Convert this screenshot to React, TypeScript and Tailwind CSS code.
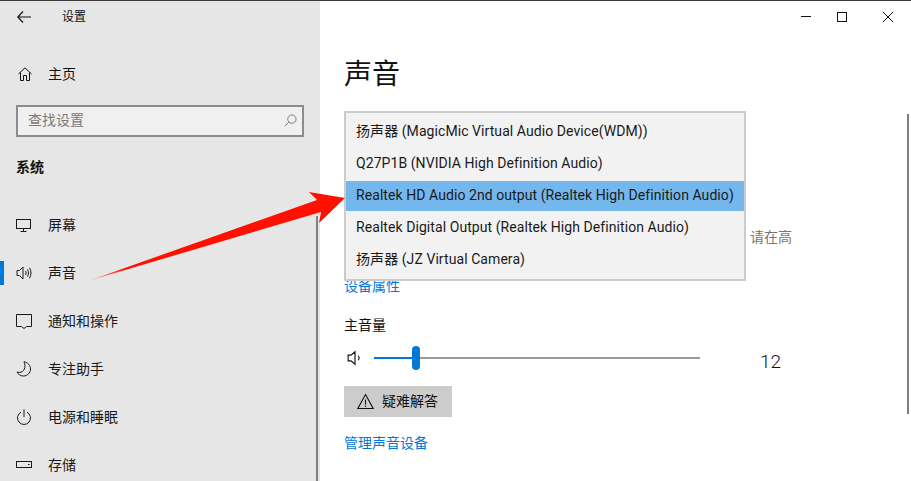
import type { ReactNode } from 'react';

const FONT = "font-['Roboto','Noto_Sans_CJK_SC',sans-serif]";

const Icon = ({ children, className = 'w-4 h-4' }: { children: ReactNode; className?: string }) => (
  <svg viewBox="0 0 16 16" fill="none" stroke="currentColor" strokeWidth="1" className={className}>
    {children}
  </svg>
);

const navItems: { label: string; active?: boolean; icon: ReactNode }[] = [
  {
    label: '屏幕',
    icon: (
      <>
        <rect x="0.5" y="2.5" width="14" height="9" />
        <path d="M7.5 11.5v3M4.5 14.5h6" />
      </>
    ),
  },
  {
    label: '声音',
    active: true,
    icon: (
      <>
        <path d="M1 5.500h2.500L7 2v12l-3.500-3.500H1z" />
        <path d="M9.500 6c.8 1.200.8 2.800 0 4M11.500 4.500c1.300 2.200 1.300 4.800 0 7M13.500 2.800c2 3.200 2 7.200 0 10.400" />
      </>
    ),
  },
  {
    label: '通知和操作',
    icon: <path d="M.5 1.500h15v12h-5L8 15.500l-2.500-2h-5z" />,
  },
  {
    label: '专注助手',
    icon: <path d="M8 .8c3.800.6 6.500 3.700 6.500 7.200 0 4-3.200 7-7 7-2.800 0-5.300-1.600-6.500-4 .8.300 1.600.400 2.400.400C8 11.400 10.500 6 8 .8z" />,
  },
  {
    label: '电源和睡眠',
    icon: (
      <>
        <path d="M5 3.200A6.500 6.500 0 1 0 11 3.200" />
        <path d="M8 .5v7.500" />
      </>
    ),
  },
  {
    label: '存储',
    icon: (
      <>
        <rect x="0.5" y="4.500" width="15" height="6" />
        <path d="M12 7.500h1.500" />
      </>
    ),
  },
];

const devices = [
  '扬声器 (MagicMic Virtual Audio Device(WDM))',
  'Q27P1B (NVIDIA High Definition Audio)',
  'Realtek HD Audio 2nd output (Realtek High Definition Audio)',
  'Realtek Digital Output (Realtek High Definition Audio)',
  '扬声器 (JZ Virtual Camera)',
];

const Sidebar = () => (
  <aside className="relative flex h-full w-[320px] shrink-0 flex-col overflow-hidden bg-[#e6e6e6]">
    <div className="flex h-[32px] shrink-0 items-center pl-[17px]">
      <svg viewBox="0 0 14 12" fill="none" stroke="currentColor" strokeWidth="1.2" className="h-[12px] w-[14px] text-[#111]">
        <path d="M6 .5.8 6 6 11.500M1 6h13" />
      </svg>
      <span className="ml-[31px] text-[12px] text-[#111]">设置</span>
    </div>
    <div className="mt-[17px] flex h-[48px] shrink-0 items-center pl-[18px] text-[14px] text-[#111]">
      <svg viewBox="0 0 14 14" fill="none" stroke="currentColor" className="h-[14px] w-[14px]">
        <path d="M.5 7 7 .8 13.500 7M2.500 5.500v8h3v-5h3v5h3v-8" />
      </svg>
      <span className="ml-[16px]">主页</span>
    </div>
    <div className="mx-[16px] mt-[7px] flex h-[32px] shrink-0 items-center justify-between border-2 border-[#8c8c8c] bg-[#f0f0f0] pb-px pl-[10px] pr-[5px] text-[14px] text-[#7a7a7a]">
      <span>查找设置</span>
      <svg viewBox="0 0 14 14" fill="none" stroke="currentColor" className="h-[13px] w-[13px] text-[#777]">
        <circle cx="8.500" cy="5.500" r="4.500" />
        <path d="M5.300 8.700.8 13.200" />
      </svg>
    </div>
    <div className="mt-[19px] shrink-0 pl-[16px] text-[14px] font-bold leading-[22px] text-[#111]">系统</div>
    <nav className="mt-[23px] flex shrink-0 flex-col">
      {navItems.map((item) => (
        <div key={item.label} className="relative flex h-[48px] shrink-0 items-center pl-[16px] text-[14px] text-[#1a1a1a]">
          {item.active && <span className="absolute left-0 top-[12px] h-[24px] w-[4px] bg-[#0078d7]" />}
          <Icon>{item.icon}</Icon>
          <span className="ml-[16px] pt-px">{item.label}</span>
        </div>
      ))}
    </nav>
    <div className="absolute bottom-0 right-[2px] top-[215px] w-[2px] bg-[#808080]" />
  </aside>
);

const Main = () => (
  <main className="relative flex h-full flex-1 flex-col bg-white pl-[24px]">
    <div className="absolute right-0 top-0 flex h-[32px] items-center text-[#111]">
      <svg viewBox="0 0 10 10" stroke="currentColor" className="mr-[26px] h-[10px] w-[10px]">
        <path d="M0 4.500h10" />
      </svg>
      <svg viewBox="0 0 10 10" fill="none" stroke="currentColor" className="mr-[36px] h-[10px] w-[10px]">
        <rect x="0.500" y="0.500" width="9" height="9" />
      </svg>
      <svg viewBox="0 0 10 10" stroke="currentColor" className="mr-[18px] h-[10px] w-[10px]">
        <path d="M0 0l10 10M10 0 0 10" />
      </svg>
    </div>
    <h1 className="mt-[54px] text-[28px] leading-[40px] text-[#111]">声音</h1>
    <div className="relative mt-[16px] h-[165px]">
      <div className="absolute left-0 top-0 z-10 w-[402px] border-2 border-[#cccccc] bg-[#f2f2f2] py-[4px] text-[14px] tracking-[0.07px] text-[#1a1a1a]">
        {devices.map((device) => (
          <div
            key={device}
            className={`mb-[2px] flex h-[30px] items-center whitespace-nowrap pb-px pl-[10px] last:mb-0 ${device.startsWith('Realtek HD') ? 'bg-[#74b7ec]' : ''}`}
          >
            {device}
          </div>
        ))}
      </div>
      <div className="absolute left-[406px] top-[115px] text-[14px] leading-[22px] text-[#767676]">请在高</div>
    </div>
    <a className="text-[14px] leading-[20px] text-[#0078d7]">设备属性</a>
    <div className="mt-[19px] text-[14px] leading-[20px] text-[#111]">主音量</div>
    <div className="mt-[10px] flex h-[26px] items-center">
      <svg viewBox="0 0 14 14" fill="none" stroke="currentColor" className="ml-[3px] h-[16px] w-[16px] text-[#111]">
        <path d="M1 4.500h2.500L7 1.500v11l-3.500-3H1zM10 5c.8 1.200.8 2.800 0 4" />
      </svg>
      <div className="relative ml-[11px] flex h-[2px] w-[326px]">
        <div className="h-full w-[42px] bg-[#0078d7]" />
        <div className="h-full flex-1 bg-[#999999]" />
        <span className="absolute left-[38px] top-[-11px] h-[24px] w-[8px] rounded-full bg-[#0078d7]" />
      </div>
      <span className="ml-[60px] mt-[8px] text-[19px] font-light leading-[24px] text-[#111]">12</span>
    </div>
    <button className="mt-[15px] flex h-[31px] w-[108px] items-center bg-[#cccccc] pl-[13px] text-[14px] text-[#111]">
      <svg viewBox="0 0 16 16" fill="none" stroke="currentColor" className="h-[17px] w-[17px]">
        <path d="M8 1.500 15.200 14.500H.8zM8 6v5M8 12v1.200" />
      </svg>
      <span className="ml-[8px]">疑难解答</span>
    </button>
    <a className="mt-[16px] text-[14px] leading-[20px] text-[#0078d7]">管理声音设备</a>
    <div className="absolute right-[2px] top-[113px] h-[300px] w-[2px] bg-[#808080]" />
  </main>
);

const App = () => (
  <div className={`relative flex h-[481px] w-[911px] flex-col overflow-hidden ${FONT}`}>
    <div className="h-px w-full shrink-0 bg-[#3a3a3a]" />
    <div className="flex min-h-0 flex-1">
      <Sidebar />
      <Main />
    </div>
    <svg viewBox="0 0 911 481" className="pointer-events-none absolute inset-0 z-20 h-[481px] w-[911px]">
      <defs>
        <linearGradient id="tail" x1="88" y1="281" x2="125" y2="269" gradientUnits="userSpaceOnUse">
          <stop offset="0" stopColor="#ff1000" stopOpacity="0.2" />
          <stop offset="1" stopColor="#ff1000" />
        </linearGradient>
      </defs>
      <polygon points="88,281 317,200 309,192 345,198 319,223 321,212" fill="url(#tail)" />
    </svg>
  </div>
);

export default App;
